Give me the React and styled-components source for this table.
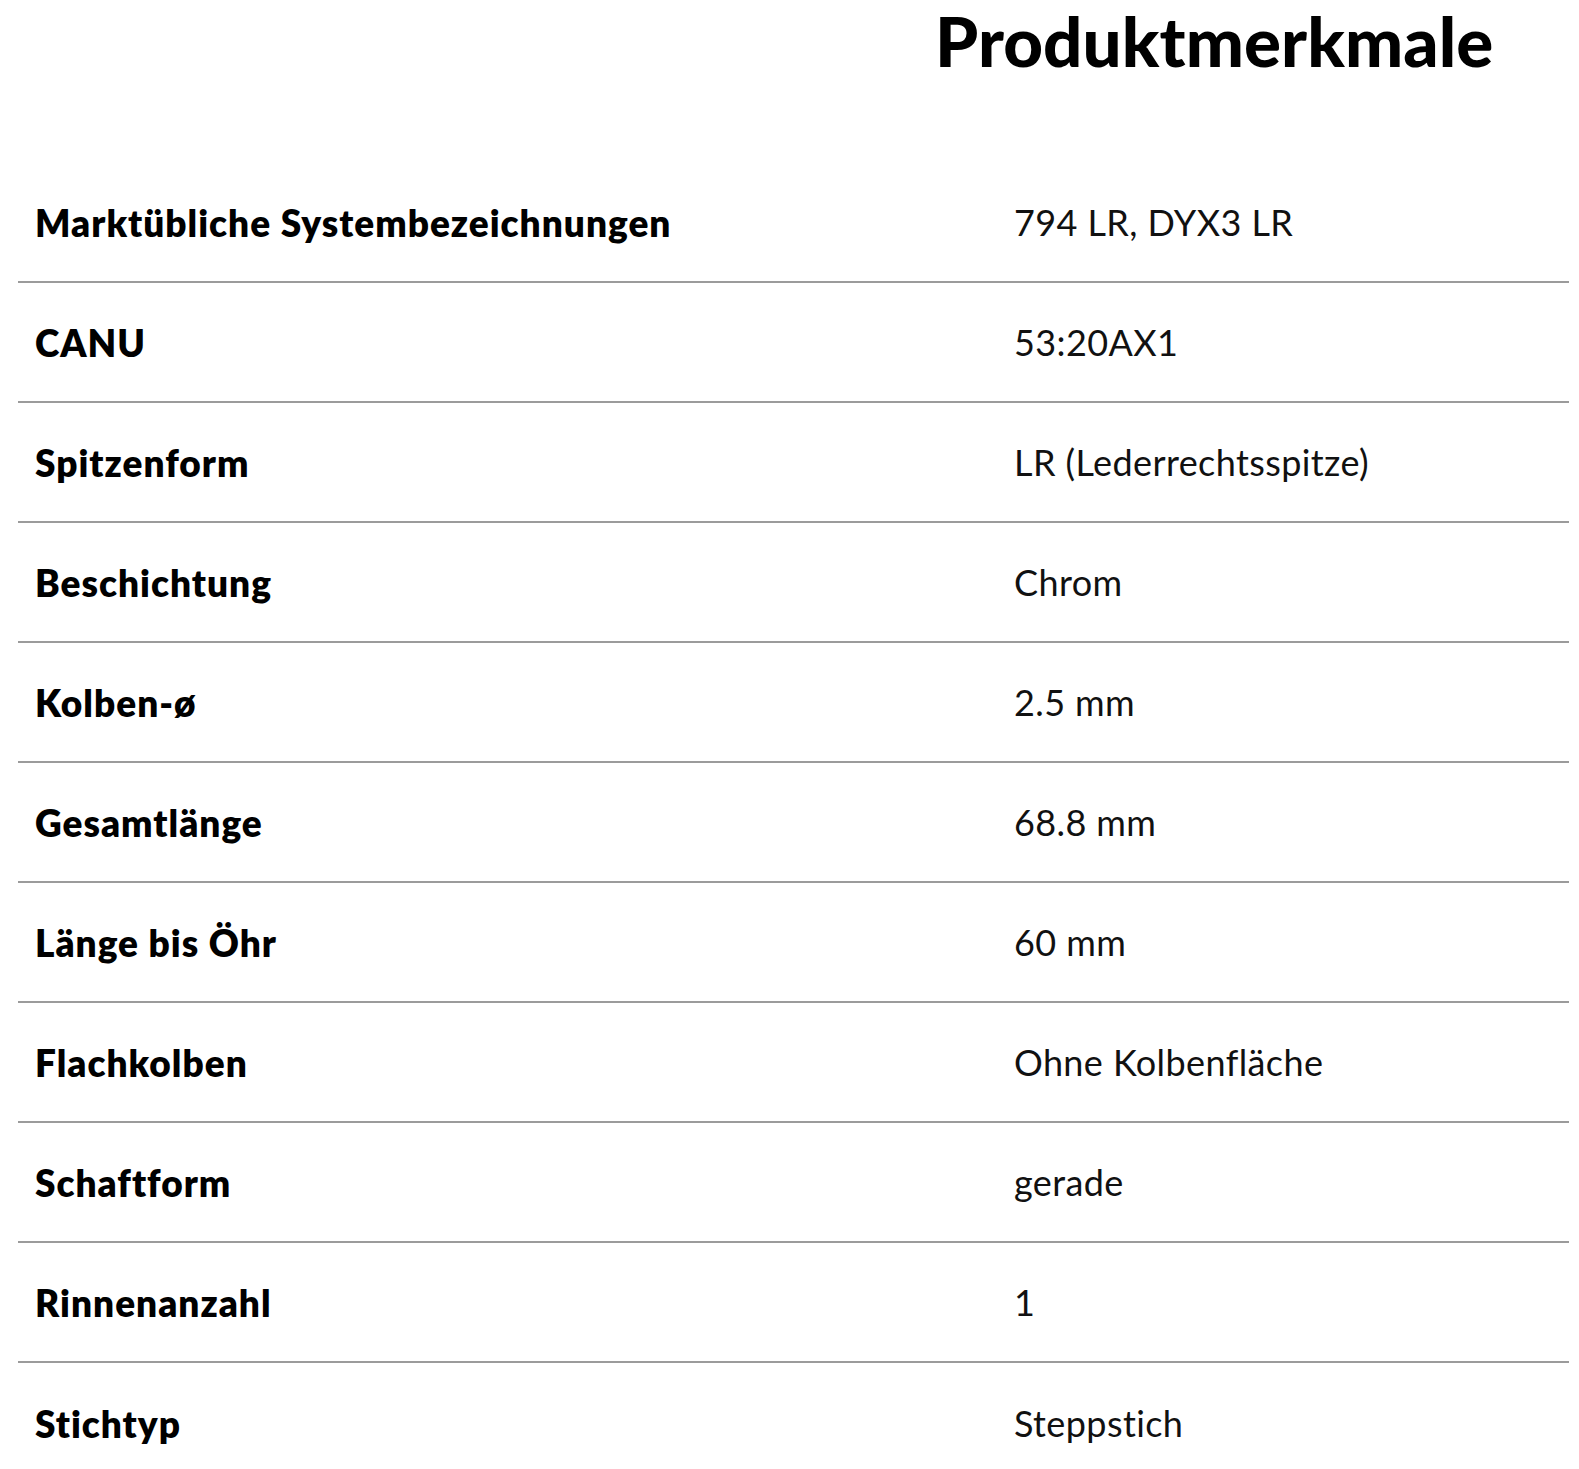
import React from "react";
import styled, { createGlobalStyle } from "styled-components";

const GlobalStyle = createGlobalStyle`
  html, body {
    margin: 0;
    padding: 0;
    background: #fff;
  }
  body {
    font-family: Lato, "Noto Sans", sans-serif;
    color: #000;
  }
`;

const Page = styled.div`
  width: 1579px;
  height: 1469px;
  overflow: hidden;
  padding: 0 10px 0 18px;
  box-sizing: border-box;
`;

const Title = styled.h2`
  margin: 0;
  padding: 1px 0 0 917px;
  height: 163px;
  box-sizing: border-box;
  font-size: 69px;
  line-height: 80px;
  font-weight: 900;
  letter-spacing: 0.1px;
`;

const Table = styled.dl`
  margin: 0;
  display: flex;
  flex-direction: column;
`;

const Row = styled.div`
  display: grid;
  grid-template-columns: 979px 1fr;
  align-items: center;
  height: 120px;
  box-sizing: border-box;
  border-bottom: ${p => (p.last ? "none" : "2px solid #9b9b9b")};
  padding-left: 17px;
`;

const Label = styled.dt`
  margin: 0;
  font-size: 37px;
  font-weight: 800;
  letter-spacing: 1px;
  color: #000;
`;

const Value = styled.dd`
  margin: 0;
  font-size: 36px;
  font-weight: 400;
  letter-spacing: 0.4px;
  color: #111;
`;

const features = [
  ["Marktübliche Systembezeichnungen", "794 LR, DYX3 LR"],
  ["CANU", "53:20AX1"],
  ["Spitzenform", "LR (Lederrechtsspitze)"],
  ["Beschichtung", "Chrom"],
  ["Kolben-ø", "2.5 mm"],
  ["Gesamtlänge", "68.8 mm"],
  ["Länge bis Öhr", "60 mm"],
  ["Flachkolben", "Ohne Kolbenfläche"],
  ["Schaftform", "gerade"],
  ["Rinnenanzahl", "1"],
  ["Stichtyp", "Steppstich"]
];

export default function App() {
  return (
    <Page>
      <GlobalStyle />
      <Title>Produktmerkmale</Title>
      <Table>
        {features.map(([label, value], i) => (
          <Row key={label} last={i === features.length - 1}>
            <Label>{label}</Label>
            <Value>{value}</Value>
          </Row>
        ))}
      </Table>
    </Page>
  );
}
